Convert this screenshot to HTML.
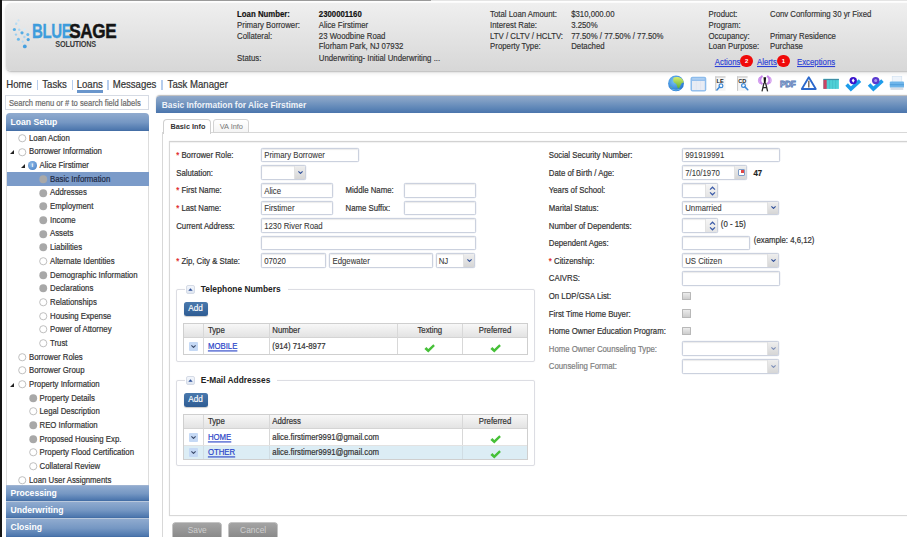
<!DOCTYPE html>
<html><head><meta charset="utf-8">
<style>
*{margin:0;padding:0;box-sizing:border-box}
html,body{width:907px;height:537px;overflow:hidden;background:#fff}
body{position:relative;font-family:"Liberation Sans",sans-serif;color:#222;font-size:7.8px}
.a{position:absolute}
.lb{position:absolute;white-space:nowrap;line-height:10px}
/* header */
#hdr{left:5.5px;top:3px;width:920px;height:67.6px;border-radius:5px;background:linear-gradient(#efefef,#d7d7d7);box-shadow:0 1px 1.5px rgba(0,0,0,.2),0 2px 4px rgba(0,0,0,.1)}
.hl{position:absolute;white-space:nowrap;font-size:7.8px;color:#333;line-height:9.821px;transform:scaleY(1.12);transform-origin:0 0}
.hl b{color:#111}
/* nav */
.nav{position:absolute;top:78px;font-size:9.6px;color:#333;white-space:nowrap;line-height:12px;transform:translateY(0.7px) scaleY(1.12);transform-origin:0 6px}
.sep{position:absolute;top:79.5px;width:1.8px;height:10px;background:#b6cdee}
/* sidebar */
#search{left:5.2px;top:95.2px;width:143.4px;height:14.6px;border:1px solid #d6dbe4;font-size:7.6px;color:#6a6a6a;padding:2.6px 0 0 2.8px;white-space:nowrap;overflow:hidden;line-height:9px}
.sh{position:absolute;left:5.5px;width:143px;height:16.8px;background:linear-gradient(#90abcf,#7597c3 55%,#4c76ad);border-bottom:1px solid #456fa6;color:#fff;font-weight:bold;font-size:8.6px;padding:4px 0 0 5px;line-height:9px}
#sbox{left:5.5px;top:130.5px;width:143px;height:354px;border:1px solid #ddd;border-top:none;border-bottom:none;overflow:hidden}
.it{position:absolute;white-space:nowrap;font-size:7.8px;color:#333;line-height:10px;transform:translateY(1px) scaleY(1.12);transform-origin:0 5px}
.ci{position:absolute;width:7.5px;height:7.5px;border-radius:50%;border:1px solid #bbb;background:#fff}
.cf{position:absolute;width:7.5px;height:7.5px;border-radius:50%;background:#a3a3a3}
.tri{position:absolute;width:0;height:0;border-left:4.3px solid transparent;border-bottom:4.3px solid #222}
/* main */
#title{left:155.8px;top:95.5px;width:760px;height:17px;border-radius:4px 0 0 0;background:linear-gradient(#90a9ca,#7d9cc3 30%,#5b84b6 75%,#4b75ac);color:#eef2f8;font-weight:bold;font-size:8.4px;padding:5px 0 0 6px;line-height:9px;box-shadow:0 -1px 1.2px rgba(0,0,0,.28)}
.inp{position:absolute;height:14.5px;border:1px solid #cbd1de;border-radius:1.5px;background:#fff;font-size:7.8px;color:#3a3a3a;padding:2.5px 0 0 2.2px;white-space:nowrap;line-height:9px;box-shadow:inset 0 1px 1px rgba(0,0,0,.08),0 0 0 0.3px #dde2ec}
.bt{position:absolute;right:0;top:0;width:11px;height:100%;background:linear-gradient(#eee,#d6d6d6);border-left:1px solid #e2e2e2}
.chev{position:absolute;left:3px;top:4.5px;width:5px;height:3px}
.req{color:#e02020}
.fl{position:absolute;white-space:nowrap;font-size:7.8px;color:#333;line-height:10px;transform:translateY(1px) scaleY(1.12);transform-origin:0 5px}
.it,.fl,.nav,#search{-webkit-text-stroke:0.18px currentColor}.inp{-webkit-text-stroke:0.08px currentColor}.hl{-webkit-text-stroke:0.15px currentColor}
.t{display:inline-block;transform:scaleY(1.12);transform-origin:0 5px}
</style></head><body>
<!-- frame borders -->
<div class="a" style="left:0;top:0;width:431px;height:1px;background:#9a9a9a"></div>
<div class="a" style="left:431px;top:0;width:476px;height:1px;background:#e4e4e4"></div>
<div class="a" style="left:0;top:0;width:1.6px;height:537px;background:#151515"></div>

<div id="hdr" class="a"></div>

<!-- logo -->
<svg class="a" style="left:8px;top:16px;overflow:visible" width="115" height="36" viewBox="0 0 115 36">
 <g transform="translate(1.2,1.2)">
  <circle cx="9.3" cy="3.2" r="1.1" fill="#c5e3f7"/>
  <circle cx="7" cy="6.5" r="1.2" fill="#b5dbf4"/>
  <circle cx="10" cy="9" r="1" fill="#d3ebf9"/>
  <circle cx="5.2" cy="12.3" r="1.6" fill="#5ab0e6"/>
  <circle cx="10" cy="12.5" r="1.2" fill="#b0d8f3"/>
  <circle cx="15.5" cy="12.2" r="1.1" fill="#d3ebf9"/>
  <circle cx="12.8" cy="15.6" r="1.6" fill="#55ace4"/>
  <circle cx="6.8" cy="17.4" r="1.2" fill="#9ccff0"/>
  <circle cx="18.6" cy="17.2" r="1.5" fill="#6ab8ea"/>
  <circle cx="15.2" cy="19.8" r="1.2" fill="#a9d4f2"/>
  <circle cx="9.2" cy="22" r="1.5" fill="#6ab8ea"/>
  <circle cx="19" cy="22.4" r="1.6" fill="#48a2e0"/>
  <circle cx="13.5" cy="24.5" r="1.1" fill="#b5dbf4"/>
  <circle cx="15.6" cy="29.2" r="1.9" fill="#46a0e0"/>
 </g>
 <g transform="translate(24.1,21.5) scale(0.74,1)"><text x="0" y="0" font-family="Liberation Sans" font-weight="bold" font-size="20.3" letter-spacing="-0.5" fill="#3d9cdc" stroke="#3d9cdc" stroke-width="0.3">BLUE</text></g>
 <g transform="translate(61.3,21.5) scale(0.845,1)"><text x="0" y="0" font-family="Liberation Sans" font-weight="bold" font-size="20.3" letter-spacing="-0.5" fill="#141414" stroke="#141414" stroke-width="0.5">SAGE</text></g>
 <g transform="translate(47.3,31.4) scale(0.85,1)"><text x="0" y="0" font-family="Liberation Sans" font-weight="bold" font-size="8.6" fill="#3a3a3a" letter-spacing="-0.25">SOLUTIONS</text></g>
</svg>
<!-- header info -->
<div class="hl" style="left:237.1px;top:9px"><b>Loan Number:</b><br>Primary Borrower:<br>Collateral:<br><br>Status:</div>
<div class="hl" style="left:318.8px;top:9px"><b>2300001160</b><br>Alice Firstimer<br>23 Woodbine Road<br>Florham Park, NJ 07932<br>Underwriting- Initial Underwriting ...</div>
<div class="hl" style="left:490.1px;top:9px">Total Loan Amount:<br>Interest Rate:<br>LTV / CLTV / HCLTV:<br>Property Type:</div>
<div class="hl" style="left:571.2px;top:9px">$310,000.00<br>3.250%<br>77.50% / 77.50% / 77.50%<br>Detached</div>
<div class="hl" style="left:708.5px;top:9px">Product:<br>Program:<br>Occupancy:<br>Loan Purpose:</div>
<div class="hl" style="left:770px;top:9px">Conv Conforming 30 yr Fixed<br><br>Primary Residence<br>Purchase</div>
<div class="hl" style="left:714.8px;top:57.3px;color:#2c3fd6;text-decoration:underline">Actions</div>
<div class="a" style="left:740.4px;top:55px;width:12.4px;height:12.4px;border-radius:50%;background:#f00a0a;color:#fff;font-size:6px;font-weight:bold;text-align:center;line-height:12px">2</div>
<div class="hl" style="left:757px;top:57.3px;color:#2c3fd6;text-decoration:underline">Alerts</div>
<div class="a" style="left:777.3px;top:55px;width:12.4px;height:12.4px;border-radius:50%;background:#f00a0a;color:#fff;font-size:6px;font-weight:bold;text-align:center;line-height:12px">1</div>
<div class="hl" style="left:797px;top:57.3px;color:#2c3fd6;text-decoration:underline">Exceptions</div>

<!-- toolbar icons -->
<svg class="a" style="left:660px;top:72px" width="247" height="22" viewBox="660 72 247 22">
 <defs>
  <radialGradient id="gb" cx="0.4" cy="0.35" r="0.7"><stop offset="0" stop-color="#7cc8f5"/><stop offset="1" stop-color="#1f6fd0"/></radialGradient>
  <linearGradient id="gl" x1="0" y1="0" x2="0" y2="1"><stop offset="0" stop-color="#d8ee70"/><stop offset="1" stop-color="#5cb030"/></linearGradient>
 </defs>
 <!-- globe -->
 <circle cx="676" cy="83.4" r="7.9" fill="url(#gb)"/>
 <path d="M673.6 77.6 C675.5 76.6 678.8 76.6 681.3 78.2 C682.8 79.3 683.6 80.8 683.7 82.4 C682.4 82.4 681.4 83.2 680.8 84.8 C680.2 86.3 679.6 87.6 678.6 88.4 C677.6 88.2 677.2 86.8 676.9 85.4 C676.6 84 675.6 83.4 674.4 82.8 C673.4 82 673 80.6 673.2 79.4 C673.3 78.6 673.4 78 673.6 77.6Z" fill="url(#gl)"/>
 <path d="M669.8 86.2 C670.8 86.8 671.8 87.6 672.6 88.6 C671.4 88.4 670.4 87.4 669.8 86.2Z" fill="#8cc840"/>
 <path d="M670.5 88.5 C673 91 679 91 681.5 88.5 C679 90 673 90 670.5 88.5Z" fill="#7fd8f5" opacity="0.8"/>
 <!-- window -->
 <rect x="690.5" y="76.8" width="15.8" height="14.8" rx="2" fill="#8dbcec"/>
 <rect x="692" y="80.9" width="12.8" height="9.2" fill="#e8ecf4"/>
 <rect x="692.2" y="78.6" width="12.4" height="0.7" fill="#dbe9fb"/>
 <line x1="696.3" y1="81" x2="696.3" y2="90" stroke="#dfe3ee" stroke-width="0.6"/>
 <line x1="700.5" y1="81" x2="700.5" y2="90" stroke="#dfe3ee" stroke-width="0.6"/>
 <!-- LE doc -->
 <rect x="715.2" y="76.4" width="10.3" height="14.4" fill="#f5f5f5"/>
 <rect x="715.2" y="76.4" width="10.3" height="1.1" fill="#c4c4c4"/>
 <rect x="715.2" y="76.4" width="1.1" height="14.4" fill="#c9c9c9"/>
 <text x="716.5" y="82.8" font-family="Liberation Sans" font-weight="bold" font-size="5.6" fill="#1a1a1a">LE</text>
 <circle cx="721" cy="85.7" r="1.9" fill="#fff" stroke="#3a88d8" stroke-width="1.2"/>
 <line x1="719.6" y1="87.1" x2="716.9" y2="89.9" stroke="#3a88d8" stroke-width="1.5" stroke-linecap="round"/>
 <!-- CD doc -->
 <rect x="737" y="76.4" width="10.6" height="14.4" fill="#f5f5f5"/>
 <rect x="737" y="76.4" width="10.6" height="1.1" fill="#c4c4c4"/>
 <rect x="737" y="76.4" width="1.1" height="14.4" fill="#c9c9c9"/>
 <text x="738.2" y="82.8" font-family="Liberation Sans" font-weight="bold" font-size="5.6" fill="#2a2a2a">CD</text>
 <circle cx="743.5" cy="85.5" r="1.9" fill="#fff" stroke="#3a88d8" stroke-width="1.2"/>
 <line x1="744.9" y1="86.9" x2="747.8" y2="89.8" stroke="#3a88d8" stroke-width="1.5" stroke-linecap="round"/>
 <!-- tower -->
 <g fill="none" stroke="#c986ec" stroke-width="2.2" stroke-linecap="round">
  <path d="M761.8 76.5 C759.6 78.5 759.6 81.8 761.8 83.6"/>
  <path d="M767.8 76.5 C770 78.5 770 81.8 767.8 83.6"/>
 </g>
 <g fill="none" stroke="#b45ae0" stroke-width="1" opacity="0.7">
  <path d="M760 76.8 C757.9 79 757.9 81.8 760 83.8"/>
  <path d="M769.6 76.8 C771.7 79 771.7 81.8 769.6 83.8"/>
 </g>
 <path d="M763.5 77.2 L766.1 77.2 L765.6 83.5 L764 83.5Z" fill="#111"/>
 <path d="M762 91.3 L764 83 M767.6 91.3 L765.6 83 M762.8 87.6 L766.8 87.6" fill="none" stroke="#2a2a2a" stroke-width="1.3"/>
 <!-- PDF -->
 <text x="780" y="87.2" font-family="Liberation Sans" font-weight="bold" font-size="8.2" fill="#f4f7fc" stroke="#5478b6" stroke-width="0.8" letter-spacing="-0.3">PDF</text>
 <!-- triangle -->
 <path d="M808.8 77.2 L815.8 89 L801.8 89Z" fill="#fff" stroke="#2b68cc" stroke-width="1.8" stroke-linejoin="round"/>
 <path d="M808.8 80.8 L808.8 87.4" stroke="#6a5a4a" stroke-width="1.3"/>
 <!-- grid -->
 <rect x="823.4" y="78.9" width="15.5" height="10" fill="#4fd0d6"/>
 <rect x="823.4" y="78.9" width="15.5" height="1.2" fill="#3e8fa6"/>
 <rect x="823.4" y="80" width="3.3" height="8.9" fill="#c94463"/>
 <g stroke="#3fb4c0" stroke-width="0.5"><line x1="829.6" y1="80" x2="829.6" y2="88.9"/><line x1="832.6" y1="80" x2="832.6" y2="88.9"/><line x1="835.6" y1="80" x2="835.6" y2="88.9"/></g>
 <!-- check 1 -->
 <path d="M846.6 84.4 L850.9 88.9 L860 80.6" fill="none" stroke="#1d9ceb" stroke-width="3.6" stroke-linejoin="miter"/>
 <circle cx="853.2" cy="80.6" r="3.7" fill="#3a14cc"/>
 <path d="M853.2 78.5 L854.7 80.6 L853.2 82.7 L851.7 80.6Z" fill="#fff"/>
 <!-- check 2 -->
 <path d="M869.1 84.4 L873.4 88.9 L882.5 80.6" fill="none" stroke="#1d9ceb" stroke-width="3.6" stroke-linejoin="miter"/>
 <circle cx="875.7" cy="80.6" r="3.7" fill="#5a3ad0"/>
 <circle cx="875.7" cy="80.6" r="1.5" fill="#a898ee"/>
 <!-- printer -->
 <rect x="892.2" y="76.3" width="9.6" height="6" fill="#eef4fb" stroke="#cfe0f0" stroke-width="0.6"/>
 <rect x="889.8" y="81.5" width="14.2" height="6.2" rx="1" fill="#6fb5ea"/>
 <rect x="889.8" y="84.3" width="14.2" height="0.9" fill="#4a9ad8"/>
 <rect x="890.5" y="87.5" width="12.8" height="2.4" fill="#d6dde6"/>
</svg>
<div class="nav" style="left:6.3px;top:77.9px">Home</div>
<div class="nav" style="left:42.3px;top:77.9px">Tasks</div>
<div class="nav" style="left:76.7px;top:77.9px">Loans</div>
<div class="nav" style="left:112.7px;top:77.9px">Messages</div>
<div class="nav" style="left:167.6px;top:77.9px">Task Manager</div>
<div class="sep" style="left:36.5px"></div>
<div class="sep" style="left:71.6px"></div>
<div class="sep" style="left:106.9px"></div>
<div class="sep" style="left:161.2px"></div>
<div class="a" style="left:76.7px;top:90.3px;width:26.2px;height:2.4px;background:#6a96cc"></div>
<div id="search" class="a"><span class="t">Search menu or # to search field labels</span></div>
<div class="sh" style="top:113.3px;height:17.5px;padding-top:4.5px;border-radius:4px 4px 0 0">Loan Setup</div>
<div id="sbox" class="a"></div>
<div class="a" style="left:6.5px;top:172.3px;width:142px;height:13.7px;background:#7b9bc9"></div>
<svg class="a" style="left:17.85px;top:134.05px" width="9" height="9" viewBox="0 0 9 9"><circle cx="4.25" cy="4.25" r="3.6" fill="#fff" stroke="#b8b8b8" stroke-width="0.9"/></svg>
<div class="it" style="left:29px;top:132.80px;color:#333">Loan Action</div>
<svg class="a" style="left:17.85px;top:147.72px" width="9" height="9" viewBox="0 0 9 9"><circle cx="4.25" cy="4.25" r="3.6" fill="#fff" stroke="#b8b8b8" stroke-width="0.9"/></svg>
<div class="tri" style="left:10.2px;top:150.2px"></div>
<div class="it" style="left:29px;top:146.47px;color:#333">Borrower Information</div>
<div class="a" style="left:28.2px;top:161.44px;width:8.4px;height:8.4px;border-radius:50%;background:radial-gradient(circle at 40% 35%,#8fb9e6,#3f7cc4);color:#fff;font-size:6px;font-weight:bold;text-align:center;line-height:8.4px">i</div>
<div class="tri" style="left:20.7px;top:163.9px"></div>
<div class="it" style="left:39.5px;top:160.14px;color:#333">Alice Firstimer</div>
<svg class="a" style="left:38.95px;top:175.06px" width="9" height="9" viewBox="0 0 9 9"><circle cx="4.25" cy="4.25" r="3.9" fill="#a9a9a9"/></svg>
<div class="it" style="left:50px;top:173.81px;color:#1e2a44">Basic Information</div>
<svg class="a" style="left:38.95px;top:188.73px" width="9" height="9" viewBox="0 0 9 9"><circle cx="4.25" cy="4.25" r="3.9" fill="#a8a8a8"/></svg>
<div class="it" style="left:50px;top:187.48px;color:#333">Addresses</div>
<svg class="a" style="left:38.95px;top:202.40px" width="9" height="9" viewBox="0 0 9 9"><circle cx="4.25" cy="4.25" r="3.9" fill="#a8a8a8"/></svg>
<div class="it" style="left:50px;top:201.15px;color:#333">Employment</div>
<svg class="a" style="left:38.95px;top:216.07px" width="9" height="9" viewBox="0 0 9 9"><circle cx="4.25" cy="4.25" r="3.9" fill="#a8a8a8"/></svg>
<div class="it" style="left:50px;top:214.82px;color:#333">Income</div>
<svg class="a" style="left:38.95px;top:229.74px" width="9" height="9" viewBox="0 0 9 9"><circle cx="4.25" cy="4.25" r="3.9" fill="#a8a8a8"/></svg>
<div class="it" style="left:50px;top:228.49px;color:#333">Assets</div>
<svg class="a" style="left:38.95px;top:243.41px" width="9" height="9" viewBox="0 0 9 9"><circle cx="4.25" cy="4.25" r="3.9" fill="#a8a8a8"/></svg>
<div class="it" style="left:50px;top:242.16px;color:#333">Liabilities</div>
<svg class="a" style="left:38.95px;top:257.08px" width="9" height="9" viewBox="0 0 9 9"><circle cx="4.25" cy="4.25" r="3.6" fill="#fff" stroke="#b8b8b8" stroke-width="0.9"/></svg>
<div class="it" style="left:50px;top:255.83px;color:#333">Alternate Identities</div>
<svg class="a" style="left:38.95px;top:270.75px" width="9" height="9" viewBox="0 0 9 9"><circle cx="4.25" cy="4.25" r="3.9" fill="#a8a8a8"/></svg>
<div class="it" style="left:50px;top:269.50px;color:#333">Demographic Information</div>
<svg class="a" style="left:38.95px;top:284.42px" width="9" height="9" viewBox="0 0 9 9"><circle cx="4.25" cy="4.25" r="3.9" fill="#a8a8a8"/></svg>
<div class="it" style="left:50px;top:283.17px;color:#333">Declarations</div>
<svg class="a" style="left:38.95px;top:298.09px" width="9" height="9" viewBox="0 0 9 9"><circle cx="4.25" cy="4.25" r="3.6" fill="#fff" stroke="#b8b8b8" stroke-width="0.9"/></svg>
<div class="it" style="left:50px;top:296.84px;color:#333">Relationships</div>
<svg class="a" style="left:38.95px;top:311.76px" width="9" height="9" viewBox="0 0 9 9"><circle cx="4.25" cy="4.25" r="3.6" fill="#fff" stroke="#b8b8b8" stroke-width="0.9"/></svg>
<div class="it" style="left:50px;top:310.51px;color:#333">Housing Expense</div>
<svg class="a" style="left:38.95px;top:325.43px" width="9" height="9" viewBox="0 0 9 9"><circle cx="4.25" cy="4.25" r="3.6" fill="#fff" stroke="#b8b8b8" stroke-width="0.9"/></svg>
<div class="it" style="left:50px;top:324.18px;color:#333">Power of Attorney</div>
<svg class="a" style="left:38.95px;top:339.10px" width="9" height="9" viewBox="0 0 9 9"><circle cx="4.25" cy="4.25" r="3.6" fill="#fff" stroke="#b8b8b8" stroke-width="0.9"/></svg>
<div class="it" style="left:50px;top:337.85px;color:#333">Trust</div>
<svg class="a" style="left:17.85px;top:352.77px" width="9" height="9" viewBox="0 0 9 9"><circle cx="4.25" cy="4.25" r="3.6" fill="#fff" stroke="#b8b8b8" stroke-width="0.9"/></svg>
<div class="it" style="left:29px;top:351.52px;color:#333">Borrower Roles</div>
<svg class="a" style="left:17.85px;top:366.44px" width="9" height="9" viewBox="0 0 9 9"><circle cx="4.25" cy="4.25" r="3.6" fill="#fff" stroke="#b8b8b8" stroke-width="0.9"/></svg>
<div class="it" style="left:29px;top:365.19px;color:#333">Borrower Group</div>
<svg class="a" style="left:17.85px;top:380.11px" width="9" height="9" viewBox="0 0 9 9"><circle cx="4.25" cy="4.25" r="3.6" fill="#fff" stroke="#b8b8b8" stroke-width="0.9"/></svg>
<div class="tri" style="left:10.2px;top:382.6px"></div>
<div class="it" style="left:29px;top:378.86px;color:#333">Property Information</div>
<svg class="a" style="left:29.25px;top:393.78px" width="9" height="9" viewBox="0 0 9 9"><circle cx="4.25" cy="4.25" r="3.9" fill="#a8a8a8"/></svg>
<div class="it" style="left:39.5px;top:392.53px;color:#333">Property Details</div>
<svg class="a" style="left:29.25px;top:407.45px" width="9" height="9" viewBox="0 0 9 9"><circle cx="4.25" cy="4.25" r="3.6" fill="#fff" stroke="#b8b8b8" stroke-width="0.9"/></svg>
<div class="it" style="left:39.5px;top:406.20px;color:#333">Legal Description</div>
<svg class="a" style="left:29.25px;top:421.12px" width="9" height="9" viewBox="0 0 9 9"><circle cx="4.25" cy="4.25" r="3.9" fill="#a8a8a8"/></svg>
<div class="it" style="left:39.5px;top:419.87px;color:#333">REO Information</div>
<svg class="a" style="left:29.25px;top:434.79px" width="9" height="9" viewBox="0 0 9 9"><circle cx="4.25" cy="4.25" r="3.9" fill="#a8a8a8"/></svg>
<div class="it" style="left:39.5px;top:433.54px;color:#333">Proposed Housing Exp.</div>
<svg class="a" style="left:29.25px;top:448.46px" width="9" height="9" viewBox="0 0 9 9"><circle cx="4.25" cy="4.25" r="3.6" fill="#fff" stroke="#b8b8b8" stroke-width="0.9"/></svg>
<div class="it" style="left:39.5px;top:447.21px;color:#333">Property Flood Certification</div>
<svg class="a" style="left:29.25px;top:462.13px" width="9" height="9" viewBox="0 0 9 9"><circle cx="4.25" cy="4.25" r="3.6" fill="#fff" stroke="#b8b8b8" stroke-width="0.9"/></svg>
<div class="it" style="left:39.5px;top:460.88px;color:#333">Collateral Review</div>
<svg class="a" style="left:17.85px;top:475.80px" width="9" height="9" viewBox="0 0 9 9"><circle cx="4.25" cy="4.25" r="3.6" fill="#fff" stroke="#b8b8b8" stroke-width="0.9"/></svg>
<div class="it" style="left:29px;top:474.55px;color:#333">Loan User Assignments</div>
<div class="sh" style="top:484.8px;height:16.6px;border-top:1px solid #9fb4d2;padding-top:3.6px">Processing</div>
<div class="sh" style="top:501.4px;height:17px;border-top:1px solid #b9c8dc;padding-top:4px">Underwriting</div>
<div class="sh" style="top:518.4px;height:19px;border-top:1px solid #b9c8dc;padding-top:4px">Closing</div>
<div id="title" class="a">Basic Information for Alice Firstimer</div>
<div class="a" style="left:162px;top:132.2px;width:760px;height:420px;border-left:1px solid #d8d8d8;border-top:1px solid #d8d8d8;box-shadow:-0.5px -0.5px 1px rgba(0,0,0,.1)"></div>
<div class="a" style="left:163.3px;top:119.2px;width:47.4px;height:14.7px;border:1px solid #cfcfcf;border-bottom:none;border-radius:4px 4px 0 0;background:#fff;font-weight:bold;font-size:7.3px;color:#333;padding:2.3px 0 0 6.2px;line-height:9px">Basic Info</div>
<div class="a" style="left:212.7px;top:119.3px;width:36.8px;height:13.6px;border:1px solid #d3d3d3;border-radius:3px 3px 0 0;background:linear-gradient(#fff,#f4f4f4);font-size:7.4px;color:#777;padding:2.2px 0 0 6px;line-height:9px">VA Info</div>
<div class="a" style="left:169.3px;top:140.6px;width:760px;height:375.9px;border:1px solid #d8d8d8;border-top:1px solid #d2d2d2;box-shadow:0 0 1px rgba(0,0,0,.12),inset 0 1px 1px rgba(0,0,0,.06)"></div>
<div class="fl" style="left:176.2px;top:150.20px;color:#333"><span class="req">*</span> Borrower Role:</div>
<div class="inp" style="left:261px;top:147.80px;width:97.50px;height:14.7px"><span class="t">Primary Borrower</span></div>
<div class="fl" style="left:176.2px;top:167.80px;color:#333">Salutation:</div>
<div class="inp sel" style="left:261px;top:165.40px;width:45.40px;height:14.7px"><div class="bt" style="width:11px"><svg class="chev" viewBox="0 0 5 3"><path d="M0.4 0.4 L2.5 2.4 L4.6 0.4" fill="none" stroke="#2f4f9a" stroke-width="1.1"/></svg></div></div>
<div class="fl" style="left:176.2px;top:185.40px;color:#333"><span class="req">*</span> First Name:</div>
<div class="inp" style="left:261px;top:183.00px;width:71.50px;height:14.7px"><span class="t">Alice</span></div>
<div class="fl" style="left:345.6px;top:185.40px;color:#333">Middle Name:</div>
<div class="inp" style="left:404.2px;top:183.00px;width:71.80px;height:14.7px"></div>
<div class="fl" style="left:176.2px;top:203.00px;color:#333"><span class="req">*</span> Last Name:</div>
<div class="inp" style="left:261px;top:200.60px;width:71.50px;height:14.7px"><span class="t">Firstimer</span></div>
<div class="fl" style="left:345.6px;top:203.00px;color:#333">Name Suffix:</div>
<div class="inp" style="left:404.2px;top:200.60px;width:71.80px;height:14.7px"></div>
<div class="fl" style="left:176.2px;top:220.60px;color:#333">Current Address:</div>
<div class="inp" style="left:261px;top:218.20px;width:215.00px;height:14.7px"><span class="t">1230 River Road</span></div>
<div class="inp" style="left:261px;top:235.80px;width:215.00px;height:14.7px"></div>
<div class="fl" style="left:176.2px;top:255.80px;color:#333"><span class="req">*</span> Zip, City &amp; State:</div>
<div class="inp" style="left:261px;top:253.40px;width:65.10px;height:14.7px"><span class="t">07020</span></div>
<div class="inp" style="left:329.3px;top:253.40px;width:103.40px;height:14.7px"><span class="t">Edgewater</span></div>
<div class="inp sel" style="left:435.5px;top:253.40px;width:39.50px;height:14.7px"><span class="t">NJ</span><div class="bt" style="width:11px"><svg class="chev" viewBox="0 0 5 3"><path d="M0.4 0.4 L2.5 2.4 L4.6 0.4" fill="none" stroke="#2f4f9a" stroke-width="1.1"/></svg></div></div>
<div class="fl" style="left:548.8px;top:150.20px;color:#333">Social Security Number:</div>
<div class="inp" style="left:682px;top:147.80px;width:97.60px;height:14.7px"><span class="t">991919991</span></div>
<div class="fl" style="left:548.8px;top:167.80px;color:#333">Date of Birth / Age:</div>
<div class="inp" style="left:682px;top:165.40px;width:65.3px;height:14.7px"><span class="t">7/10/1970</span><div class="bt" style="width:12px"><div class="a" style="left:2.5px;top:3px;width:7px;height:7px;background:#fff;border:1px solid #7d9cc8;border-radius:1px"><div class="a" style="right:0;top:0;width:3px;height:3px;background:#e04848"></div></div></div></div>
<div class="fl" style="left:753.5px;top:167.80px;font-weight:bold;color:#222">47</div>
<div class="fl" style="left:548.8px;top:185.40px;color:#333">Years of School:</div>
<div class="inp" style="left:682px;top:183.00px;width:35.7px;height:14.7px"><div class="bt" style="width:11.5px;background:linear-gradient(#f6f6f6,#e4e4e4)"><svg class="a" style="left:2.5px;top:2px" width="7" height="10" viewBox="0 0 7 10"><path d="M1 3.6 L3.5 1.2 L6 3.6" fill="none" stroke="#3a5aa8" stroke-width="1.2"/><path d="M1 6.4 L3.5 8.8 L6 6.4" fill="none" stroke="#3a5aa8" stroke-width="1.2"/></svg></div></div>
<div class="fl" style="left:548.8px;top:203.00px;color:#333">Marital Status:</div>
<div class="inp sel" style="left:682px;top:200.60px;width:97.30px;height:14.7px"><span class="t">Unmarried</span><div class="bt" style="width:11px"><svg class="chev" viewBox="0 0 5 3"><path d="M0.4 0.4 L2.5 2.4 L4.6 0.4" fill="none" stroke="#2f4f9a" stroke-width="1.1"/></svg></div></div>
<div class="fl" style="left:548.8px;top:220.60px;color:#333">Number of Dependents:</div>
<div class="inp" style="left:682px;top:218.20px;width:35.7px;height:14.7px"><div class="bt" style="width:11.5px;background:linear-gradient(#f6f6f6,#e4e4e4)"><svg class="a" style="left:2.5px;top:2px" width="7" height="10" viewBox="0 0 7 10"><path d="M1 3.6 L3.5 1.2 L6 3.6" fill="none" stroke="#3a5aa8" stroke-width="1.2"/><path d="M1 6.4 L3.5 8.8 L6 6.4" fill="none" stroke="#3a5aa8" stroke-width="1.2"/></svg></div></div>
<div class="fl" style="left:720.8px;top:218.80px">(0 - 15)</div>
<div class="fl" style="left:548.8px;top:238.20px;color:#333">Dependent Ages:</div>
<div class="inp" style="left:682px;top:235.80px;width:67.80px;height:14.7px"></div>
<div class="fl" style="left:753.8px;top:235.30px">(example: 4,6,12)</div>
<div class="fl" style="left:548.8px;top:255.80px;color:#333"><span class="req">*</span> Citizenship:</div>
<div class="inp sel" style="left:682px;top:253.40px;width:97.30px;height:14.7px"><span class="t">US Citizen</span><div class="bt" style="width:11px"><svg class="chev" viewBox="0 0 5 3"><path d="M0.4 0.4 L2.5 2.4 L4.6 0.4" fill="none" stroke="#2f4f9a" stroke-width="1.1"/></svg></div></div>
<div class="fl" style="left:548.8px;top:273.40px;color:#333">CAIVRS:</div>
<div class="inp" style="left:682px;top:271.00px;width:98.00px;height:14.7px"></div>
<div class="fl" style="left:548.8px;top:291.00px;color:#333">On LDP/GSA List:</div>
<div class="a" style="left:682px;top:291.75px;width:8.5px;height:8.5px;border:1px solid #b8b8b8;border-radius:0.5px;background:linear-gradient(#ececec,#cdcdcd)"></div>
<div class="fl" style="left:548.8px;top:308.60px;color:#333">First Time Home Buyer:</div>
<div class="a" style="left:682px;top:309.35px;width:8.5px;height:8.5px;border:1px solid #b8b8b8;border-radius:0.5px;background:linear-gradient(#ececec,#cdcdcd)"></div>
<div class="fl" style="left:548.8px;top:326.20px;color:#333">Home Owner Education Program:</div>
<div class="a" style="left:682px;top:326.95px;width:8.5px;height:8.5px;border:1px solid #b8b8b8;border-radius:0.5px;background:linear-gradient(#ececec,#cdcdcd)"></div>
<div class="fl" style="left:548.8px;top:343.80px;color:#7e7e7e">Home Owner Counseling Type:</div>
<div class="inp sel" style="left:682px;top:341.40px;width:97.30px;height:14.7px"><div class="bt" style="width:11px"><svg class="chev" viewBox="0 0 5 3"><path d="M0.4 0.4 L2.5 2.4 L4.6 0.4" fill="none" stroke="#7d8fb8" stroke-width="1.1"/></svg></div></div>
<div class="fl" style="left:548.8px;top:361.40px;color:#7e7e7e">Counseling Format:</div>
<div class="inp sel" style="left:682px;top:359.00px;width:97.30px;height:14.7px"><div class="bt" style="width:11px"><svg class="chev" viewBox="0 0 5 3"><path d="M0.4 0.4 L2.5 2.4 L4.6 0.4" fill="none" stroke="#7d8fb8" stroke-width="1.1"/></svg></div></div>
<div class="a" style="left:175.6px;top:289.3px;width:359.9px;height:72.6px;border:1px solid #dcdde3;border-radius:2px;box-shadow:0 0 1px rgba(0,0,0,.1)"></div>
<div class="a" style="left:184.5px;top:286.3px;width:103px;height:6px;background:#fff"></div>
<div class="a" style="left:185.5px;top:285.00px;width:9.2px;height:9.4px;border:1px solid #d5dbe6;border-radius:2px;background:linear-gradient(#f3f6fb,#dfe6f1)"><svg class="a" style="left:1.6px;top:2.2px" width="5" height="3" viewBox="0 0 5 3"><path d="M0.3 2.7 L2.5 0.3 L4.7 2.7Z" fill="#2c4f98"/></svg></div>
<div class="a" style="left:200.8px;top:284.40px;font-weight:bold;font-size:8.4px;color:#222;white-space:nowrap;line-height:10px">Telephone Numbers</div>
<div class="a" style="left:175.6px;top:380.1px;width:359.9px;height:86.4px;border:1px solid #dcdde3;border-radius:2px;box-shadow:0 0 1px rgba(0,0,0,.1)"></div>
<div class="a" style="left:184.5px;top:377.1px;width:92.5px;height:6px;background:#fff"></div>
<div class="a" style="left:185.5px;top:375.80px;width:9.2px;height:9.4px;border:1px solid #d5dbe6;border-radius:2px;background:linear-gradient(#f3f6fb,#dfe6f1)"><svg class="a" style="left:1.6px;top:2.2px" width="5" height="3" viewBox="0 0 5 3"><path d="M0.3 2.7 L2.5 0.3 L4.7 2.7Z" fill="#2c4f98"/></svg></div>
<div class="a" style="left:200.8px;top:375.20px;font-weight:bold;font-size:8.4px;color:#222;white-space:nowrap;line-height:10px">E-Mail Addresses</div>
<div class="a" style="left:183.6px;top:301.8px;width:24px;height:14.3px;border-radius:2.5px;background:linear-gradient(#4a79ad,#2e5c93);color:#fff;font-size:8.2px;text-align:center;line-height:14px;-webkit-text-stroke:0.15px #fff;box-shadow:0 1px 1px rgba(0,0,0,.2)">Add</div>
<div class="a" style="left:183.6px;top:392.7px;width:24px;height:14.3px;border-radius:2.5px;background:linear-gradient(#4a79ad,#2e5c93);color:#fff;font-size:8.2px;text-align:center;line-height:14px;-webkit-text-stroke:0.15px #fff;box-shadow:0 1px 1px rgba(0,0,0,.2)">Add</div>
<div class="a" style="left:183.3px;top:322.9px;width:344.6px;height:32.20px;border:1px solid #cfcfcf;background:#fff"></div>
<div class="a" style="left:184.3px;top:323.90px;width:342.6px;height:14.50px;background:linear-gradient(#f7f7f7,#e3e3e3);border-bottom:1px solid #d4d4d4"></div>
<div class="a" style="left:203.4px;top:323.90px;width:1px;height:30.20px;background:#d8d8d8"></div>
<div class="a" style="left:268.5px;top:323.90px;width:1px;height:30.20px;background:#d8d8d8"></div>
<div class="a" style="left:397.3px;top:323.90px;width:1px;height:30.20px;background:#d8d8d8"></div>
<div class="a" style="left:462.2px;top:323.90px;width:1px;height:30.20px;background:#d8d8d8"></div>
<div class="fl" style="left:207.9px;top:325.3px">Type</div>
<div class="fl" style="left:272.3px;top:325.3px">Number</div>
<div class="fl" style="left:397.3px;width:65px;text-align:center;top:325.3px">Texting</div>
<div class="fl" style="left:462.2px;width:65.7px;text-align:center;top:325.3px">Preferred</div>
<div class="a" style="left:189.3px;top:342.05px;width:9px;height:8.8px;background:#c5d9f5;border-radius:1px"><svg class="a" style="left:2px;top:2.8px" width="5" height="3" viewBox="0 0 5 3"><path d="M0.4 0.4 L2.5 2.4 L4.6 0.4" fill="none" stroke="#3a4a6a" stroke-width="1.1"/></svg></div>
<div class="fl" style="left:207.9px;top:341.15px;color:#2b45c8;text-decoration:underline">MOBILE</div>
<div class="fl" style="left:272.3px;top:341.15px">(914) 714-8977</div>
<svg class="a" style="left:424.30px;top:343.65px" width="11" height="9" viewBox="0 0 11 9"><path d="M0.4 5 L2.4 3.1 L4.3 5 L9.3 0.2 L10.9 1.9 L4.3 8.6Z" fill="#46c038"/></svg>
<svg class="a" style="left:489.50px;top:343.65px" width="11" height="9" viewBox="0 0 11 9"><path d="M0.4 5 L2.4 3.1 L4.3 5 L9.3 0.2 L10.9 1.9 L4.3 8.6Z" fill="#46c038"/></svg>
<div class="a" style="left:183.3px;top:413.5px;width:344.6px;height:46.60px;border:1px solid #cfcfcf;background:#fff"></div>
<div class="a" style="left:184.3px;top:414.50px;width:342.6px;height:14.60px;background:linear-gradient(#f7f7f7,#e3e3e3);border-bottom:1px solid #d4d4d4"></div>
<div class="a" style="left:203.4px;top:414.50px;width:1px;height:44.60px;background:#d8d8d8"></div>
<div class="a" style="left:268.5px;top:414.50px;width:1px;height:44.60px;background:#d8d8d8"></div>
<div class="a" style="left:462.2px;top:414.50px;width:1px;height:44.60px;background:#d8d8d8"></div>
<div class="fl" style="left:207.9px;top:416px">Type</div>
<div class="fl" style="left:272.3px;top:416px">Address</div>
<div class="fl" style="left:462.2px;width:65.7px;text-align:center;top:416px">Preferred</div>
<div class="a" style="left:184.3px;top:445.40px;width:342.6px;height:1px;background:#e2e2e2"></div>
<div class="a" style="left:189.3px;top:433.05px;width:9px;height:8.8px;background:#c5d9f5;border-radius:1px"><svg class="a" style="left:2px;top:2.8px" width="5" height="3" viewBox="0 0 5 3"><path d="M0.4 0.4 L2.5 2.4 L4.6 0.4" fill="none" stroke="#3a4a6a" stroke-width="1.1"/></svg></div>
<div class="fl" style="left:207.9px;top:432.15px;color:#2b45c8;text-decoration:underline">HOME</div>
<div class="fl" style="left:272.3px;top:432.15px">alice.firstimer9991@gmail.com</div>
<svg class="a" style="left:489.50px;top:434.65px" width="11" height="9" viewBox="0 0 11 9"><path d="M0.4 5 L2.4 3.1 L4.3 5 L9.3 0.2 L10.9 1.9 L4.3 8.6Z" fill="#46c038"/></svg>
<div class="a" style="left:184.3px;top:446.40px;width:342.6px;height:12.70px;background:#dcedf5"></div>
<div class="a" style="left:203.4px;top:446.40px;width:1px;height:12.70px;background:#d0dde4"></div>
<div class="a" style="left:268.5px;top:446.40px;width:1px;height:12.70px;background:#d0dde4"></div>
<div class="a" style="left:462.2px;top:446.40px;width:1px;height:12.70px;background:#d0dde4"></div>
<div class="a" style="left:189.3px;top:448.05px;width:9px;height:8.8px;background:#c5d9f5;border-radius:1px"><svg class="a" style="left:2px;top:2.8px" width="5" height="3" viewBox="0 0 5 3"><path d="M0.4 0.4 L2.5 2.4 L4.6 0.4" fill="none" stroke="#3a4a6a" stroke-width="1.1"/></svg></div>
<div class="fl" style="left:207.9px;top:447.15px;color:#2b45c8;text-decoration:underline">OTHER</div>
<div class="fl" style="left:272.3px;top:447.15px">alice.firstimer9991@gmail.com</div>
<svg class="a" style="left:489.50px;top:449.65px" width="11" height="9" viewBox="0 0 11 9"><path d="M0.4 5 L2.4 3.1 L4.3 5 L9.3 0.2 L10.9 1.9 L4.3 8.6Z" fill="#46c038"/></svg>
<div class="a" style="left:173.1px;top:523.2px;width:48.3px;height:16px;border-radius:2px;background:linear-gradient(#a4a4a4,#868686);color:#cfcfcf;box-shadow:0 0 0 0.5px #8a8a8a;font-size:8.4px;text-align:center;line-height:14px">Save</div>
<div class="a" style="left:229px;top:523.2px;width:48.3px;height:16px;border-radius:2px;background:linear-gradient(#a4a4a4,#868686);color:#cfcfcf;box-shadow:0 0 0 0.5px #8a8a8a;font-size:8.4px;text-align:center;line-height:14px">Cancel</div>
</body></html>
